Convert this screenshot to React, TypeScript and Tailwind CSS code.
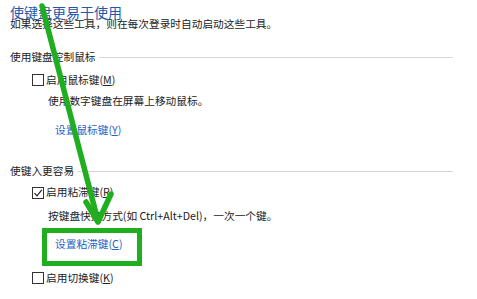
import React from "react";

const font = { fontFamily: '"Noto Sans CJK SC", "Noto Sans", sans-serif' };

function Box({ checked }: { checked?: boolean }) {
  return (
    <div className="w-[12px] h-[12px] border border-[#333] bg-white mr-[2px] flex items-center justify-center shrink-0">
      {checked && (
        <svg width="10" height="10" viewBox="0 0 10 10">
          <path d="M1.5 5.2 L4 7.8 L8.8 1.8" fill="none" stroke="#222" strokeWidth="1.2" />
        </svg>
      )}
    </div>
  );
}

function Heading({ text, mt }: { text: string; mt: string }) {
  return (
    <div className={`flex items-center h-[14px] pl-[10px] pr-[24px] ${mt}`}>
      <span className="leading-none whitespace-nowrap">{text}</span>
      <div className="flex-1 h-px bg-[#d6d6d6] ml-[3px]" />
    </div>
  );
}

export default function App() {
  return (
    <div className="relative w-[477px] h-[299px] bg-white overflow-hidden text-[10.7px] text-[#222]" style={font}>
      <div className="flex flex-col">
        <div className="h-[12px] mt-[6px] pl-[10px] flex items-center">
          <span className="text-[14px] leading-[12px] text-[#2356a8] whitespace-nowrap">使键盘更易于使用</span>
        </div>
        <div className="h-[10px] mt-[1px] pl-[10px] flex items-center">
          <span className="leading-[10px] whitespace-nowrap">如果选择这些工具，则在每次登录时自动启动这些工具。</span>
        </div>

        <Heading text="使用键盘控制鼠标" mt="mt-[21.5px]" />
        <div className="h-[14px] mt-[8.5px] pl-[32px] flex items-center">
          <Box />
          <span className="leading-none whitespace-nowrap">启用鼠标键(<span className="underline">M</span>)</span>
        </div>
        <div className="h-[14px] mt-[7.5px] pl-[48px] flex items-center">
          <span className="leading-none whitespace-nowrap">使用数字键盘在屏幕上移动鼠标。</span>
        </div>
        <div className="h-[14px] mt-[14.5px] pl-[55px] flex items-center">
          <span className="leading-none whitespace-nowrap text-[#1e62c6]">设置鼠标键(<span className="underline">Y</span>)</span>
        </div>

        <Heading text="使键入更容易" mt="mt-[27px]" />
        <div className="h-[14px] mt-[7.5px] pl-[32px] flex items-center">
          <Box checked />
          <span className="leading-none whitespace-nowrap">启用粘滞键(<span className="underline">R</span>)</span>
        </div>
        <div className="h-[14px] mt-[9.5px] pl-[48px] flex items-center">
          <span className="leading-none whitespace-nowrap">按键盘快捷方式(如 Ctrl+Alt+Del)，一次一个键。</span>
        </div>
        <div className="h-[14px] mt-[14px] pl-[55px] flex items-center">
          <span className="leading-none whitespace-nowrap text-[#1e62c6]">设置粘滞键(<span className="underline">C</span>)</span>
        </div>
        <div className="h-[14px] mt-[20px] pl-[32px] flex items-center">
          <Box />
          <span className="leading-none whitespace-nowrap">启用切换键(<span className="underline">K</span>)</span>
        </div>
      </div>

      {/* green highlight box */}
      <div className="absolute left-[42px] top-[228px] w-[100px] h-[38px] border-[5px] border-[#1fae1f]" />

      {/* green arrow */}
      <svg className="absolute left-0 top-0" width="477" height="299" viewBox="0 0 477 299">
        <g stroke="#1fae1f" strokeWidth="5.5" strokeLinecap="round" fill="none">
          <line x1="42" y1="6" x2="98" y2="221" />
          <polyline points="86,202 98,222 111,194" strokeLinejoin="round" />
        </g>
      </svg>
    </div>
  );
}
